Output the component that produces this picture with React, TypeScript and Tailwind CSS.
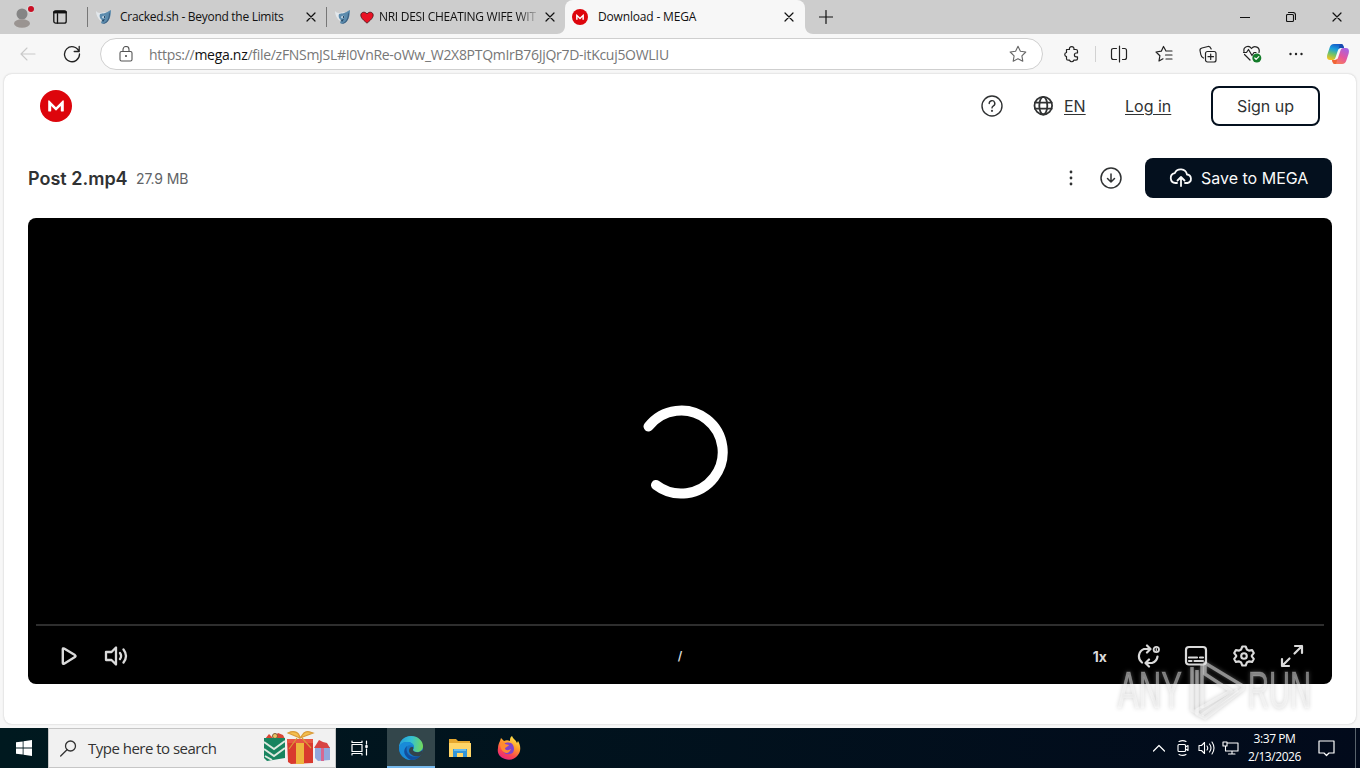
import type { ReactNode } from "react";

type IconProps = {
  children: ReactNode;
  className?: string;
  box?: string;
  width?: number;
};

function Icon({ children, className = "size-6", box = "0 0 24 24", width = 1.2 }: IconProps) {
  return (
    <svg
      viewBox={box}
      className={`shrink-0 ${className}`}
      fill="none"
      stroke="currentColor"
      strokeWidth={width}
      strokeLinecap="round"
      strokeLinejoin="round"
    >
      {children}
    </svg>
  );
}

function CloseIcon() {
  return (
    <Icon box="0 0 10 10" className="size-2.5" width={1.2}>
      <path d="M1 1l8 8M9 1l-8 8" />
    </Icon>
  );
}

function BirdIcon() {
  return (
    <svg viewBox="0 0 16 16" className="size-4 shrink-0">
      <path d="M0 2c1 1 2 2 4 2l6-1-5 9C2 10 0 6 0 2z" fill="#e3e8ec" />
      <path d="M4 5c3-1 5 0 9-3l2-1c0 5-1 10-5 13-2 1-4 1-5 0l1-3c-2-1-3-4-2-6z" fill="#5b8bad" />
      <path d="M13 3c0 5-1 9-5 11l-2 1c4 0 8-3 8-10z" fill="#3b5f80" />
      <path d="M6 7.500l2.500-1 1 1.500-1.500 1.500-2-.5z" fill="#b4cbdc" />
      <path d="M8 7h1v2H8zM6 11l3-1-2 3z" fill="#274866" />
    </svg>
  );
}

function MegaLogo({ className }: { className: string }) {
  return (
    <svg viewBox="0 0 32 32" className={`shrink-0 ${className}`}>
      <circle cx="16" cy="16" r="16" fill="#dd050c" />
      <path
        d="M8.200 20.900V11c0-.7.7-.9 1.100-.5l6.700 6.700 6.700-6.700c.4-.4 1.100-.2 1.100.5v9.900c0 .3-.2.5-.5.5h-2c-.3 0-.5-.2-.5-.5v-4.800l-4.300 4.200c-.3.3-.7.3-1 0l-4.300-4.200v4.800c0 .3-.2.5-.5.5h-2c-.3 0-.5-.2-.5-.5z"
        fill="#fff"
      />
    </svg>
  );
}

function TabBar() {
  return (
    <div className="flex h-[34px] shrink-0 items-center bg-[#cdcdcd] text-[12px] text-[#111]">
      <svg viewBox="0 0 24 24" className="ml-2.5 size-6 shrink-0">
        <circle cx="12" cy="9" r="5.500" fill="#858585" />
        <ellipse cx="12" cy="18.500" rx="8" ry="4.200" fill="#9a9491" />
        <circle cx="21" cy="4" r="4" fill="#dadada" />
        <circle cx="21" cy="4" r="3" fill="#c90f24" />
      </svg>
      <Icon box="0 0 14 14" className="ml-[19px] size-3.5" width={1.3}>
        <rect x=".8" y=".8" width="12.400" height="12.400" rx="2" />
        <path d="M1 2.500h12M4.500 4v9" />
        <path d="M1.500 2h11" strokeWidth={2.4} />
      </Icon>
      <div className="flex h-full w-[259px] shrink-0 items-center pl-5">
        <div className="h-5 w-px shrink-0 bg-[#777]" />
        <div className="flex flex-1 items-center pl-2">
          <BirdIcon />
          <span className="ml-2 w-[186px] shrink-0 whitespace-nowrap tracking-[-0.290px]">Cracked.sh - Beyond the Limits</span>
          <CloseIcon />
        </div>
      </div>
      <div className="flex h-full w-[239px] shrink-0 items-center">
        <div className="h-5 w-px shrink-0 bg-[#777]" />
        <div className="flex flex-1 items-center pl-2">
          <BirdIcon />
          <svg viewBox="0 0 14 13" className="ml-[9px] h-[13px] w-3.5 shrink-0">
            <path
              d="M7 12.200C4 9.500.8 7.200.8 4.100.8 1 5 0 7 3c2-3 6.200-2 6.200 1.100C13.200 7.200 10 9.500 7 12.200z"
              fill="#e91224"
              stroke="#441015"
              strokeWidth=".8"
            />
          </svg>
          <span className="ml-[5px] w-[158px] shrink-0 whitespace-nowrap bg-linear-to-r from-[#111] from-88% to-[#11111122] bg-clip-text tracking-[-0.290px] text-transparent">
            NRI DESI CHEATING WIFE WIT
          </span>
          <span className="ml-2 flex">
            <CloseIcon />
          </span>
        </div>
      </div>
      <div className="relative flex h-full w-60 shrink-0 items-center rounded-t-lg bg-[#f7f7f7] pl-[7px]">
        <svg viewBox="0 0 8 8" className="absolute bottom-0 -left-2 size-2">
          <path d="M8 0v8H0c4 0 8-3 8-8z" fill="#f7f7f7" />
        </svg>
        <svg viewBox="0 0 8 8" className="absolute -right-2 bottom-0 size-2">
          <path d="M0 0v8h8C4 8 0 5 0 0z" fill="#f7f7f7" />
        </svg>
        <MegaLogo className="size-4" />
        <span className="ml-2.5 w-[186px] whitespace-nowrap tracking-[-0.170px]">Download - MEGA</span>
        <CloseIcon />
      </div>
      <Icon box="0 0 14 14" className="ml-3.5 size-3.5" width={1.2}>
        <path d="M7 .5v13M.5 7h13" />
      </Icon>
      <div className="ml-auto flex items-center gap-9 pr-[18px]">
        <Icon box="0 0 10 10" className="size-2.5" width={1}>
          <path d="M0 5.500h10" />
        </Icon>
        <Icon box="0 0 10 10" className="size-2.5" width={1.1}>
          <rect x=".5" y="2.500" width="7" height="7" rx="1" />
          <path d="M2.500.5H7q2.500 0 2.500 2.500v4.500" />
        </Icon>
        <CloseIcon />
      </div>
    </div>
  );
}

function CopilotIcon() {
  return (
    <svg viewBox="0 0 24 24" className="size-6 shrink-0">
      <defs>
        <linearGradient id="copilotLeft" x1=".6" y1="0" x2=".3" y2="1">
          <stop offset="0" stopColor="#1558c8" />
          <stop offset=".35" stopColor="#1aa0dc" />
          <stop offset=".65" stopColor="#6fc26b" />
          <stop offset="1" stopColor="#f3c31d" />
        </linearGradient>
        <linearGradient id="copilotRight" x1=".8" y1="0" x2=".2" y2="1">
          <stop offset="0" stopColor="#a263e6" />
          <stop offset=".5" stopColor="#e5569d" />
          <stop offset="1" stopColor="#fa8450" />
        </linearGradient>
      </defs>
      <path d="M8 2h7c2 0 2.500 2 3 4h-3c-2 0-2.700 1-3.300 3l-2 6c-.6 2-1.200 3-3.200 3H4c-3 0-3.500-3-2.500-6l2-6C4.300 3.500 5.500 2 8 2z" fill="url(#copilotLeft)" />
      <path d="M16 22H9c-2 0-2.500-2-3-4h3c2 0 2.700-1 3.300-3l2-6c.6-2 1.200-3 3.200-3H20c3 0 3.500 3 2.500 6l-2 6c-.8 2.500-2 4-4.500 4z" fill="url(#copilotRight)" />
      <path d="M14 2h1c2 0 2.500 2 3 4h-3c-1.400 0-2.100.5-2.600 1.300z" fill="#174bb0" />
      <path d="M6 18h3c1.300 0 2-.5 2.500-1.200L10 22H9c-2 0-2.500-2-3-4z" fill="#f06438" />
    </svg>
  );
}

function Toolbar() {
  return (
    <div className="flex h-10 shrink-0 items-center bg-[#f7f7f7] text-[#222]">
      <Icon box="0 0 16 16" className="ml-5 size-4 text-[#c9c9c9]" width={1.1}>
        <path d="M15 8H1M7 2L1 8l6 6" />
      </Icon>
      <Icon box="0 0 18 18" className="ml-[27px] size-[18px]" width={1.3}>
        <path d="M16 6.500A7.500 7.500 0 1 0 16.500 9M16.200 1.500v5h-5" />
      </Icon>
      <div className="ml-[19px] flex h-8 w-[943px] items-center rounded-full border border-[#cfcfcf] bg-white pl-[17px]">
        <Icon box="0 0 16 16" className="size-4 text-[#555]" width={1.1}>
          <rect x="2" y="5.500" width="12" height="9.500" rx="1.500" />
          <path d="M5 5.500V3.500a3 3 0 0 1 6 0v2" />
          <circle cx="8" cy="10" r=".5" fill="currentColor" />
        </Icon>
        <span className="ml-[15px] whitespace-nowrap text-[14px] tracking-[-0.290px] text-[#777]">
          https://<span className="text-[#111]">mega.nz</span>/file/zFNSmJSL#I0VnRe-oWw_W2X8PTQmIrB76JjQr7D-itKcuj5OWLIU
        </span>
        <Icon box="0 0 18 18" className="mr-[15px] ml-auto size-[18px] text-[#666]" width={1.1}>
          <path d="M9 1.300l2.400 4.900 5.400.8-3.900 3.800.9 5.400L9 13.700l-4.800 2.500.9-5.400L1.200 7l5.400-.8z" />
        </Icon>
      </div>
      <Icon box="0 0 18 18" className="ml-[20px] size-[18px]" width={1.2}>
        <path d="M3.500 4.500h3a2.300 2.300 0 1 1 4.400 0H13q1.500 0 1.500 1.500v2h-1.200a1.900 1.900 0 1 0 0 3.800h1.200v2q0 1.400-1.500 1.400h-2.200a2.200 2.200 0 0 1-4.200 0h-1.400q-1.700 0-1.700-1.500v-2a2.200 2.200 0 0 1 0-4.300z" />
      </Icon>
      <div className="ml-[14px] h-4 w-px bg-[#d2d2d2]" />
      <Icon box="0 0 18 18" className="ml-[14px] size-[18px]" width={1.2}>
        <path d="M9.500 1v16M6.500 3.500h-3q-2 0-2 2v7q0 2 2 2h3M12.500 3.500h2q2 0 2 2v7q0 2-2 2h-2" />
      </Icon>
      <Icon box="0 0 18 18" className="ml-[27px] size-[18px]" width={1.2}>
        <path d="M11 6L8.500 1.500 6.300 6.200 1 7l3.900 3.700L4 16l4-2.200M12 6h5M10.500 10H17M11 14h6" />
      </Icon>
      <Icon box="0 0 18 18" className="ml-[26px] size-[18px]" width={1.2}>
        <rect x="6.500" y="6.500" width="10.500" height="10.500" rx="2" />
        <path d="M9 11.700h5.500M11.700 9v5.500M4.500 13C2.500 12 2 11 1.800 9.500L1 5.500Q.8 3.500 3 3l6-1.500q2-.4 3.200 2.500" />
      </Icon>
      <Icon box="0 0 20 20" className="ml-[25px] size-5" width={1.2}>
        <path d="M8 16L2.500 10.500M2 7.500C1 3 6.500.5 9.500 4.500c3-4 9-1 7.500 4M1.500 8.500h3l2-3 3.500 6 2-3h2" />
        <circle cx="14.800" cy="14" r="4.500" fill="#147c2a" stroke="none" />
        <path d="M12.800 14l1.300 1.300 2.700-2.700" stroke="#fff" />
      </Icon>
      <Icon box="0 0 18 18" className="ml-[25px] size-[18px]" width={0}>
        <g fill="currentColor">
          <circle cx="3.500" cy="9" r="1.200" />
          <circle cx="9" cy="9" r="1.200" />
          <circle cx="14.500" cy="9" r="1.200" />
        </g>
      </Icon>
      <span className="ml-[21px] flex">
        <CopilotIcon />
      </span>
    </div>
  );
}

function SiteHeader() {
  return (
    <header className="flex h-16 items-center pr-9 pl-9 font-[Inter,sans-serif] text-[16px] text-[#303233]">
      <MegaLogo className="size-8" />
      <Icon className="ml-auto size-6" width={1.4}>
        <circle cx="12" cy="12" r="10" />
        <path d="M9.200 9.500a2.800 2.800 0 1 1 4.200 2.400c-.9.500-1.400 1-1.400 2" />
        <circle cx="12" cy="16.800" r=".4" fill="currentColor" />
      </Icon>
      <Icon box="0 0 20 20" className="ml-[29px] size-5" width={1.8}>
        <circle cx="10.300" cy="9.700" r="8.800" />
        <ellipse cx="10.300" cy="9.700" rx="4" ry="8.800" />
        <path d="M2 6.700h16.600M2 12.700h16.600" />
      </Icon>
      <span className="ml-[11px] w-[22px] underline underline-offset-2">EN</span>
      <span className="ml-[39px] w-[46px] whitespace-nowrap underline underline-offset-2">Log in</span>
      <button className="ml-10 h-10 w-[109px] rounded-lg border-2 border-[#04101e] text-[#303233]">Sign up</button>
    </header>
  );
}

function FileBar() {
  return (
    <div className="flex h-20 items-center px-6 font-[Inter,sans-serif] text-[#303233]">
      <h1 className="w-[108px] whitespace-nowrap text-[18px] font-semibold">Post 2.mp4</h1>
      <span className="pt-px text-[14px] tracking-[-0.100px] text-[#616366]">27.9 MB</span>
      <Icon className="ml-auto size-6" width={0}>
        <g fill="currentColor">
          <circle cx="12" cy="6" r="1.400" />
          <circle cx="12" cy="12" r="1.400" />
          <circle cx="12" cy="18" r="1.400" />
        </g>
      </Icon>
      <Icon className="ml-4 size-6" width={1.5}>
        <circle cx="12" cy="12" r="10" />
        <path d="M12 8v8M8.500 12.500L12 16l3.500-3.500" />
      </Icon>
      <button className="ml-[22px] flex h-10 w-[187px] items-center rounded-lg bg-[#04101e] pl-6 text-[16px] text-[#fafafa]">
        <Icon className="size-6" width={1.8}>
          <path d="M8 17H6.500a5 5 0 0 1-.7-9.900A6.500 6.500 0 0 1 18 8.500a4.300 4.300 0 0 1 .5 8.500H16M12 20v-8.500M8.500 14.500L12 11l3.500 3.500" />
        </Icon>
        <span className="ml-2 whitespace-nowrap">Save to MEGA</span>
      </button>
    </div>
  );
}

function Player() {
  return (
    <section className="mx-6 flex h-[466px] flex-col rounded-lg bg-black text-[#dadada]">
      <div className="flex h-[406px] shrink-0 items-center justify-center pt-[62px]">
        <svg viewBox="0 0 94 94" className="ml-1 size-[94px]" fill="none" stroke="#fff" strokeWidth="10" strokeLinecap="round">
          <path d="M13.500 21.500A41.500 41.500 0 1 1 21 80" />
        </svg>
      </div>
      <div className="mx-2 h-0.5 shrink-0 bg-[#2e2e2e]" />
      <div className="grid flex-1 grid-cols-[1fr_auto_1fr] items-center px-7 pt-0.5 font-[Inter,sans-serif]">
        <div className="flex items-center gap-6">
          <Icon width={2.4}>
            <path d="M6.800 5.200v13.600q0 1.400 1.300.9l10.800-6.600q1.300-1 0-2L8.100 4.500q-1.300-.5-1.300.7z" />
          </Icon>
          <Icon width={2.3}>
            <path d="M12 3.500v17L7.500 16H2V8h5.500zM16 9q2.200 3 0 6M19.500 5.500q5 6.500 0 13" />
          </Icon>
        </div>
        <span className="text-[12px] font-semibold">/</span>
        <div className="flex items-center justify-end gap-6">
          <span className="mr-[5px] text-[14px] font-bold">1x</span>
          <Icon width={2.2}>
            <path d="M6 18.500A7.800 7.800 0 0 1 8 5h6M11 1.500L14.500 5 11 8.500M21.500 12.500A7.800 7.800 0 0 1 16 19h-6M13 15.500L9.500 19l3.500 3.500" />
            <circle cx="20.300" cy="5.500" r="2.700" strokeWidth="1.800" />
            <path d="M20.300 4.500v2" strokeWidth="1.200" />
          </Icon>
          <Icon width={2.2}>
            <rect x="2" y="3" width="20" height="17.500" rx="3" />
            <path d="M5 13.500h8M16 13.500h3M5 17h2.500M10.500 17H19" />
          </Icon>
          <Icon width={2.1}>
            <path d="M10.300 2.500h3.400l1.200 3 2 1.100 3.200-.5 1.700 3-2 2.500v.8l2 2.500-1.700 3-3.200-.5-2 1.100-1.200 3h-3.400l-1.200-3-2-1.100-3.200.5-1.700-3 2-2.500v-.8l-2-2.500 1.700-3 3.200.5 2-1.100z" />
            <circle cx="12" cy="12" r="2.800" />
          </Icon>
          <Icon width={2.2}>
            <path d="M14.500 9.500L22 2M15 2h7v7M9.500 14.500L2 22M9 22H2v-7" />
          </Icon>
        </div>
      </div>
    </section>
  );
}

function Watermark() {
  return (
    <svg
      viewBox="0 0 204 72"
      className="pointer-events-none absolute top-[653px] left-[1114px] h-[72px] w-[204px] overflow-visible drop-shadow-[0_0_2px_#999999]"
    >
      <g
        fill="#fff"
        fillOpacity=".42"
        stroke="#fff"
        strokeOpacity=".2"
        fontFamily="Liberation Sans, sans-serif"
        fontSize="51"
      >
        <text x="4" y="55" textLength="64" lengthAdjust="spacingAndGlyphs">ANY</text>
        <text x="134" y="55" textLength="63" lengthAdjust="spacingAndGlyphs">RUN</text>
      </g>
      <g fill="none" stroke="#fff" strokeOpacity=".48" strokeWidth="3.500" strokeLinejoin="round">
        <path d="M78 14v43l5 3V17M88 12v43" />
        <path d="M91 10l38 23v3L91 65l-8-4v-4l34-19-26-17z" />
        <path d="M88 62l36-25" />
      </g>
    </svg>
  );
}

function Gifts() {
  return (
    <svg viewBox="0 0 70 36" className="h-9 w-[70px] shrink-0">
      <path d="M3 9l4-5 4 4 5-5 5 2 2 4z" fill="#d94534" />
      <circle cx="13" cy="6" r="2.500" fill="#eac465" stroke="#805c35" />
      <path d="M2 8h21v20L5 31l-3-3z" fill="#17845f" />
      <path d="M2 12l10 7 11-8M2 19l10 7 11-8M3 26l7 4" fill="none" stroke="#dce9df" strokeWidth="2" />
      <path d="M25 9h26v24l-22 1-3-2z" fill="#d93a2e" />
      <path d="M34 9h8v25h-8z" fill="#edb53e" />
      <path d="M25 9h26v4H25z" fill="#e85543" />
      <path d="M38 8L26 3c6-3 11-1 12 5zM38 8l4-5c3-3 6-1 9 0zM35 8l-8 11M40 8l9 10" fill="#f4bf4e" stroke="#d99a38" strokeWidth="1.200" />
      <path d="M53 17h15v13l-12 1-3-3z" fill="#91a7dc" />
      <path d="M59 17h3v14h-3z" fill="#d76791" />
      <path d="M52 18l5-8 4 2 4 1 3 5z" fill="#d84343" />
    </svg>
  );
}

function EdgeIcon() {
  return (
    <svg viewBox="0 0 24 24" className="size-6 shrink-0">
      <defs>
        <linearGradient id="edgeTop" x1="0" y1=".4" x2="1" y2=".5">
          <stop offset="0" stopColor="#249fdc" />
          <stop offset=".5" stopColor="#35c1d1" />
          <stop offset="1" stopColor="#72d95a" />
        </linearGradient>
      </defs>
      <circle cx="12" cy="12" r="12" fill="#1676c7" />
      <path d="M0 12C0 5 5 0 12 0s12 5 12 10c0 4-3 6-6 6-2 0-4-1-4-2 0-.5 1-1 1-3 0-3-3-5-7-5-4 0-7 2-8 6z" fill="url(#edgeTop)" />
      <path d="M8 10c-4 4-2 11 4 14C5 24 0 18 0 12c1-4 4-6 8-6 4 0 7 2 7 5-2-2-5-2-7-1z" fill="#198bd8" />
      <path d="M8 10c-2 6 2 13 13 10-2 3-6 4-9 4-7-3-9-10-4-14z" fill="#124f9e" />
      <path d="M14 14c0 2 5 4 10 0l-1 4-2 2c-6 1-10-1-11-5 0-2 1-4 3-4 2 0 1 2 1 3z" fill="#33434b" />
    </svg>
  );
}

function FolderIcon() {
  return (
    <svg viewBox="0 0 22 20" className="h-5 w-[22px] shrink-0">
      <path d="M0 1h7l2 2h12v15H0z" fill="#e5a72e" />
      <path d="M0 5h22v14H0z" fill="#ffd567" />
      <path d="M4 19v-8h14v8h-4v-4H8v4z" fill="#3295d9" />
      <path d="M5 11h12v2H5z" fill="#67bbed" />
    </svg>
  );
}

function FirefoxIcon() {
  return (
    <svg viewBox="0 0 24 24" className="size-6 shrink-0">
      <defs>
        <linearGradient id="fox" x1=".8" y1="0" x2=".3" y2="1">
          <stop offset="0" stopColor="#fff04f" />
          <stop offset=".4" stopColor="#ff9d2b" />
          <stop offset=".75" stopColor="#fa4450" />
          <stop offset="1" stopColor="#e52485" />
        </linearGradient>
      </defs>
      <path d="M3 5l1-3 3 3c2-1 4-1 6 0 0-2 0-4 2-5 1 3 4 4 5 7l1-2c3 5 3 10 0 14-3 4-8 6-13 4C2 21 0 17 1 12c0-3 1-5 2-7z" fill="url(#fox)" />
      <path d="M7 8c3-2 7-2 9 1 2 4 1 8-3 9-4 1-7-1-7-4z" fill="#8043cc" />
      <path d="M3 7c2-1 4-1 5 1l4 1c-1 2-4 2-4 4 2 2 4 1 6 0-1 3-3 4-5 4-4-1-6-5-6-10z" fill="#ff8b31" />
    </svg>
  );
}

function Taskbar() {
  return (
    <footer className="flex h-10 shrink-0 items-center bg-linear-to-r from-[#00191f] to-[#020a1b] text-white">
      <div className="flex w-12 justify-center">
        <svg viewBox="0 0 16 16" className="size-4" fill="#fff">
          <path d="M0 2.300L6.700 1.400v6.200H0zM7.500 1.300L16 0v7.600H7.500zM0 8.400h6.700v6.200L0 13.700zM7.500 8.400H16V16l-8.500-1.300z" />
        </svg>
      </div>
      <div className="flex h-full w-72 items-center border border-[#c6c6c6] bg-[#f1f1f1] pl-[11px] text-[#333]">
        <Icon box="0 0 17 17" className="size-[17px]" width={1.3}>
          <circle cx="10.500" cy="6" r="5" />
          <path d="M7 9.700L.7 16" />
        </Icon>
        <span className="ml-[11px] w-[174px] whitespace-nowrap text-[15px] tracking-[-0.510px]">Type here to search</span>
        <Gifts />
      </div>
      <div className="flex w-[51px] justify-center">
        <Icon box="0 0 18 16" className="mr-[3px] h-4 w-[18px]" width={1.2}>
          <path d="M1 4.500h10v7H1zM1 1v1.500h10V1M1 15v-1.500h10V15M15.500 1v3M15.500 9v6" />
          <path d="M15.500 6v1" strokeWidth="2.500" />
        </Icon>
      </div>
      <div className="flex h-full w-12 items-center justify-center border-b-2 border-[#76b9ed] bg-[#33464b] pt-0.5">
        <EdgeIcon />
      </div>
      <div className="flex w-[49px] justify-center">
        <FolderIcon />
      </div>
      <div className="flex w-[49px] justify-center">
        <FirefoxIcon />
      </div>
      <div className="ml-auto flex h-full items-center">
        <Icon box="0 0 12 12" className="size-3" width={1.2}>
          <path d="M.5 9L6 3.500 11.500 9" />
        </Icon>
        <Icon box="0 0 16 16" className="ml-2.5 size-4" width={1.1}>
          <rect x="3" y="4.500" width="7.500" height="7" rx="1" />
          <path d="M10.500 7l2.500-1.500v5L10.500 9M4 1.500Q8-.3 11 1.500M4 14.500q4 1.800 7 0" />
        </Icon>
        <Icon box="0 0 17 16" className="ml-[7px] h-4 w-[17px]" width={1.1}>
          <path d="M1 5.500h2.500l3-3v11l-3-3H1zM9 6q1.500 2 0 4M11.500 4q3 4 0 8M14 2q4 6 0 12" />
        </Icon>
        <Icon box="0 0 17 16" className="ml-[7px] h-4 w-[17px]" width={1.1}>
          <path d="M5.500 3H16v8H3.500V6M10 11v3M6.500 14H13M1 2h4v4H1z" />
        </Icon>
        <div className="ml-2 flex w-[55px] flex-col items-center whitespace-nowrap text-[12px] leading-[18px] tracking-[-0.440px]">
          <span>3:37 PM</span>
          <span>2/13/2026</span>
        </div>
        <Icon box="0 0 17 17" className="ml-[16px] size-[17px]" width={1.2}>
          <path d="M1 1h15v12h-5l-2.500 2.500L6 13H1z" />
        </Icon>
        <div className="ml-5 h-full w-px bg-[#59636c]" />
        <div className="w-1" />
      </div>
    </footer>
  );
}

export default function App() {
  return (
    <div className="relative flex h-[768px] w-[1360px] flex-col overflow-hidden bg-[#f7f7f7] font-['Open_Sans','Noto_Sans',sans-serif]">
      <TabBar />
      <Toolbar />
      <main className="mx-1 mb-1 h-[650px] shrink-0 rounded-lg bg-white shadow-[0_0_2px_#bdbdbd]">
        <SiteHeader />
        <FileBar />
        <Player />
      </main>
      <Taskbar />
      <Watermark />
    </div>
  );
}
